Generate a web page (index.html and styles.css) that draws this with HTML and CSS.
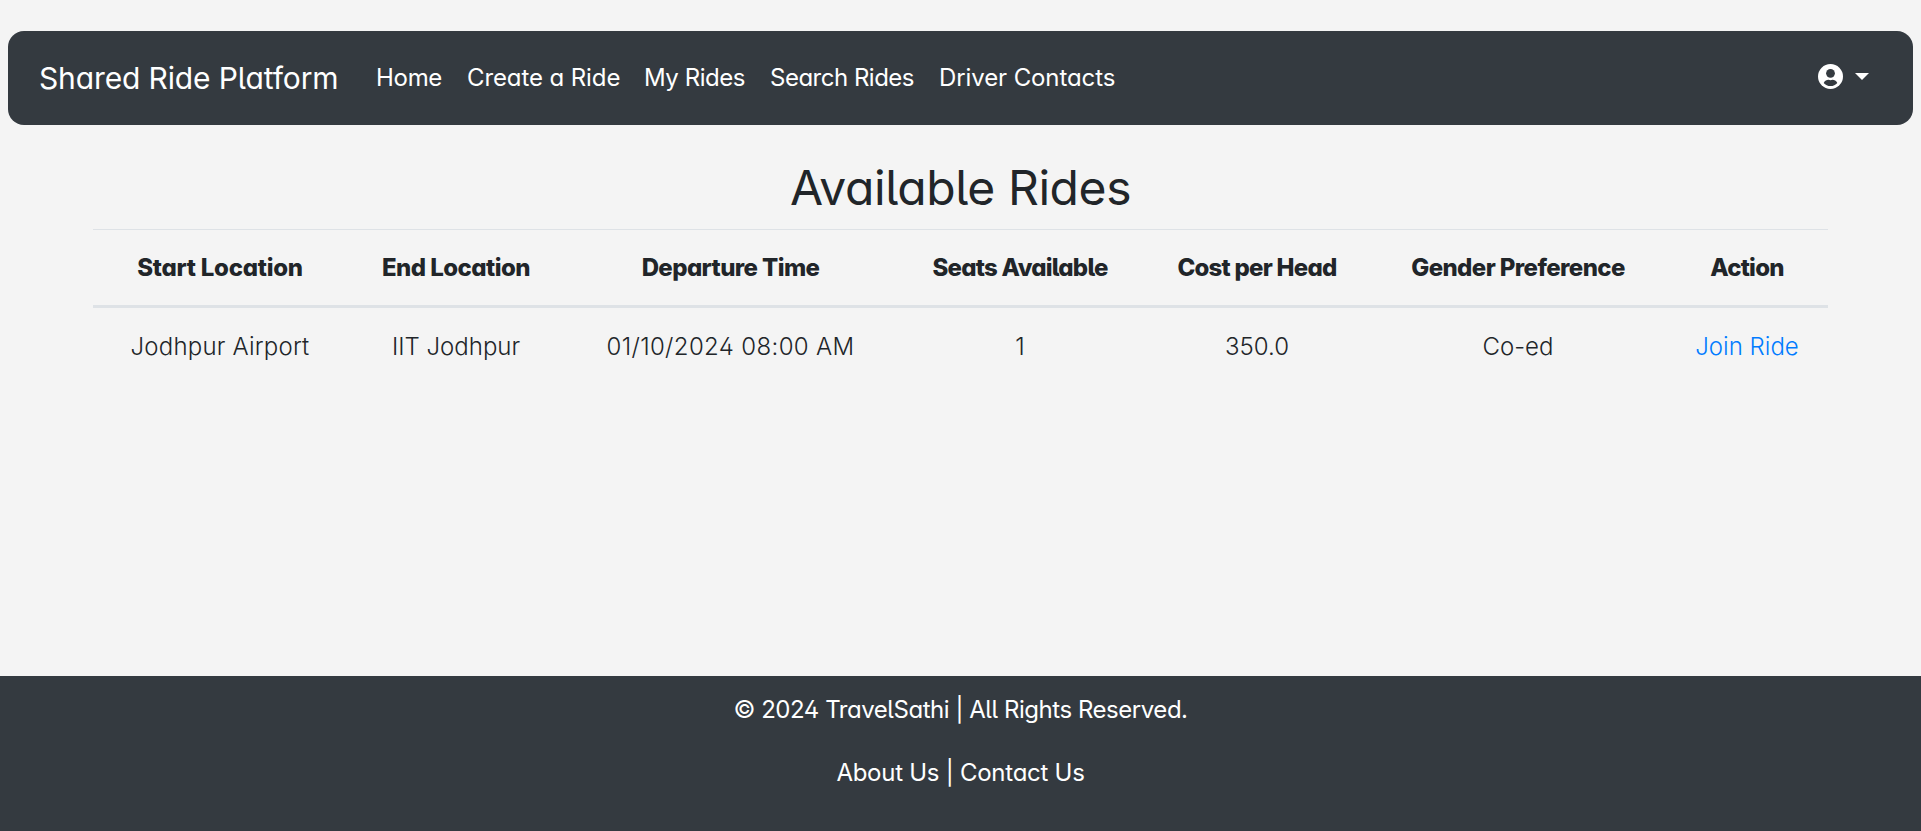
FILE: index.html
```html
<!DOCTYPE html>
<html lang="en">
<head>
<meta charset="utf-8">
<title>Shared Ride Platform</title>
<link rel="stylesheet" href="styles.css">
</head>
<body>
<nav class="navbar">
  <a class="brand">Shared Ride Platform</a>
  <div class="links">
    <a class="link-home">Home</a>
    <a class="link-create">Create a Ride</a>
    <a class="link-mine">My Rides</a>
    <a class="link-search">Search Rides</a>
    <a class="link-drivers">Driver Contacts</a>
  </div>
  <div class="account">
    <svg class="user" viewBox="0 0 25 25"><circle cx="12.5" cy="12.5" r="12.5" fill="#fff"/><circle cx="12.5" cy="9.3" r="4.4" fill="#343a40"/><path d="M5.7 18.9C6.5 16.5 9 15.7 10.4 15.7L12.5 16.2L14.6 15.7C16 15.7 18.5 16.5 19.3 18.9C17.6 21 15.2 22 12.5 22C9.8 22 7.4 21 5.7 18.9Z" fill="#343a40"/></svg>
    <span class="caret"></span>
  </div>
</nav>
<main class="content">
  <h2 class="title">Available Rides</h2>
  <table class="rides">
    <colgroup><col class="c1"><col class="c2"><col class="c3"><col class="c4"><col class="c5"><col class="c6"><col class="c7"></colgroup>
    <thead><tr><th class="th-start">Start Location</th><th class="th-end">End Location</th><th class="th-time">Departure Time</th><th>Seats Available</th><th>Cost per Head</th><th class="th-gender">Gender Preference</th><th>Action</th></tr></thead>
    <tbody><tr><td class="td-start">Jodhpur Airport</td><td>IIT Jodhpur</td><td class="td-time">01/10/2024 08:00 AM</td><td>1</td><td>350.0</td><td>Co-ed</td><td><a class="join">Join Ride</a></td></tr></tbody>
  </table>
</main>
<footer class="footer">
  <p class="copyright">© 2024 TravelSathi | All Rights Reserved.</p>
  <p class="footer-links"><a>About Us</a> | <a>Contact Us</a></p>
</footer>
</body>
</html>
```
FILE: styles.css
```css
*{box-sizing:border-box}
body{margin:0;height:831px;display:flex;flex-direction:column;background:#f4f4f4;color:#212529;font:400 24px/36px "Inter",sans-serif;font-feature-settings:"cv11","cv05","cv02";overflow:hidden}
.navbar{flex:none;display:flex;align-items:center;margin:31px 8px 0;height:94px;padding:0 44px 0 31px;border-radius:16px;background:#343a40;color:#fff}
.brand{width:337px;font-size:30px;white-space:nowrap;letter-spacing:-.13px}
.links{display:flex;flex:1;white-space:nowrap}
.link-home{width:91px;letter-spacing:-.3px}
.link-create{width:177px;letter-spacing:-.1px}
.link-mine{width:126px;letter-spacing:-.45px}
.link-search{width:169px;letter-spacing:-.5px}
.link-drivers{letter-spacing:-.1px}
.account{display:flex;align-items:center;gap:12px;padding-bottom:3px}
.user{width:25px;height:25px}
.caret{border:7px solid transparent;border-top-color:#fff;border-bottom:0}
.content{flex:1;padding:32px 93px 0}
.title{margin:0 0 11px;text-align:center;font-size:48px;line-height:61px;font-weight:400;letter-spacing:-.42px}
.rides{width:1735px;table-layout:fixed;border-collapse:collapse;text-align:center;white-space:nowrap}
.c1{width:254px}.c2{width:218px}.c3{width:331px}.c4{width:248px}.c5{width:226px}.c6{width:296px}.c7{width:162px}
th{height:77px;padding:0;border-top:1px solid #dee2e6;border-bottom:3px solid #dee2e6;font-weight:800;letter-spacing:-.75px}
.th-start{letter-spacing:-.25px}
.th-end{letter-spacing:-.55px}
.th-time,.th-gender{letter-spacing:-.6px}
td{height:79px;padding:1px 0 0;font-weight:300}
.td-start{letter-spacing:.2px}
.td-time{letter-spacing:.35px}
.join{color:#007bff}
.footer{height:155px;padding:16px 0;background:#343a40;color:#fff;text-align:center}
.footer p{margin:0 0 27px}
.copyright{letter-spacing:-.46px}
.footer-links{letter-spacing:-.26px}
```
